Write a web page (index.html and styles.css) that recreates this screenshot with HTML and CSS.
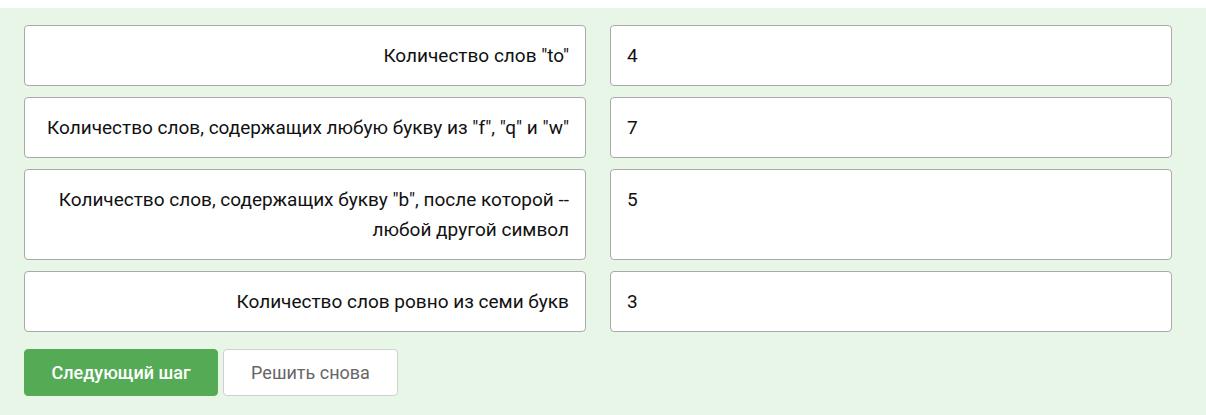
FILE: index.html
```html
<!DOCTYPE html>
<html lang="ru">
<head>
<meta charset="utf-8">
<link rel="stylesheet" href="styles.css">
</head>
<body>
<div class="panel">
  <div class="grid">
    <div class="label">Количество слов "to"</div>
    <div class="value">4</div>
    <div class="label">Количество слов, содержащих любую букву из "f", "q" и "w"</div>
    <div class="value">7</div>
    <div class="label">Количество слов, содержащих букву "b", после которой --<br>любой другой символ</div>
    <div class="value top">5</div>
    <div class="label">Количество слов ровно из семи букв</div>
    <div class="value">3</div>
  </div>
  <div class="actions">
    <button class="btn btn-primary">Следующий шаг</button>
    <button class="btn btn-default">Решить снова</button>
  </div>
</div>
</body>
</html>
```
FILE: styles.css
```css
html, body {
  margin: 0;
  padding: 0;
  background: #fff;
}
body {
  padding-top: 8px;
  font-family: Roboto, "Liberation Sans", Arial, sans-serif;
  font-size: 19px;
  color: #111;
}
.panel {
  background: #e7f6e7;
  padding: 17px 34px 30px 24px;
}
.grid {
  display: grid;
  grid-template-columns: 1fr 1fr;
  column-gap: 24px;
  row-gap: 11px;
}
.label, .value {
  background: #fff;
  border: 1px solid #a9a9a9;
  border-radius: 4px;
  line-height: 30px;
  padding: 15px 16px 14px;
}
.label {
  text-align: right;
}
.value {
  text-align: left;
}
.actions {
  display: flex;
  gap: 5px;
  margin-top: 17px;
}
.btn {
  font-family: Roboto, "Liberation Sans", Arial, sans-serif;
  font-size: 18px;
  height: 47px;
  border-radius: 4px;
  cursor: pointer;
}
.btn-primary {
  background: #55ab55;
  border: 1px solid #55ab55;
  color: #fff;
  font-weight: 500;
  width: 194px;
}
.btn-default {
  background: #fff;
  border: 1px solid #d0d0d0;
  color: #666;
  width: 175px;
}
```
